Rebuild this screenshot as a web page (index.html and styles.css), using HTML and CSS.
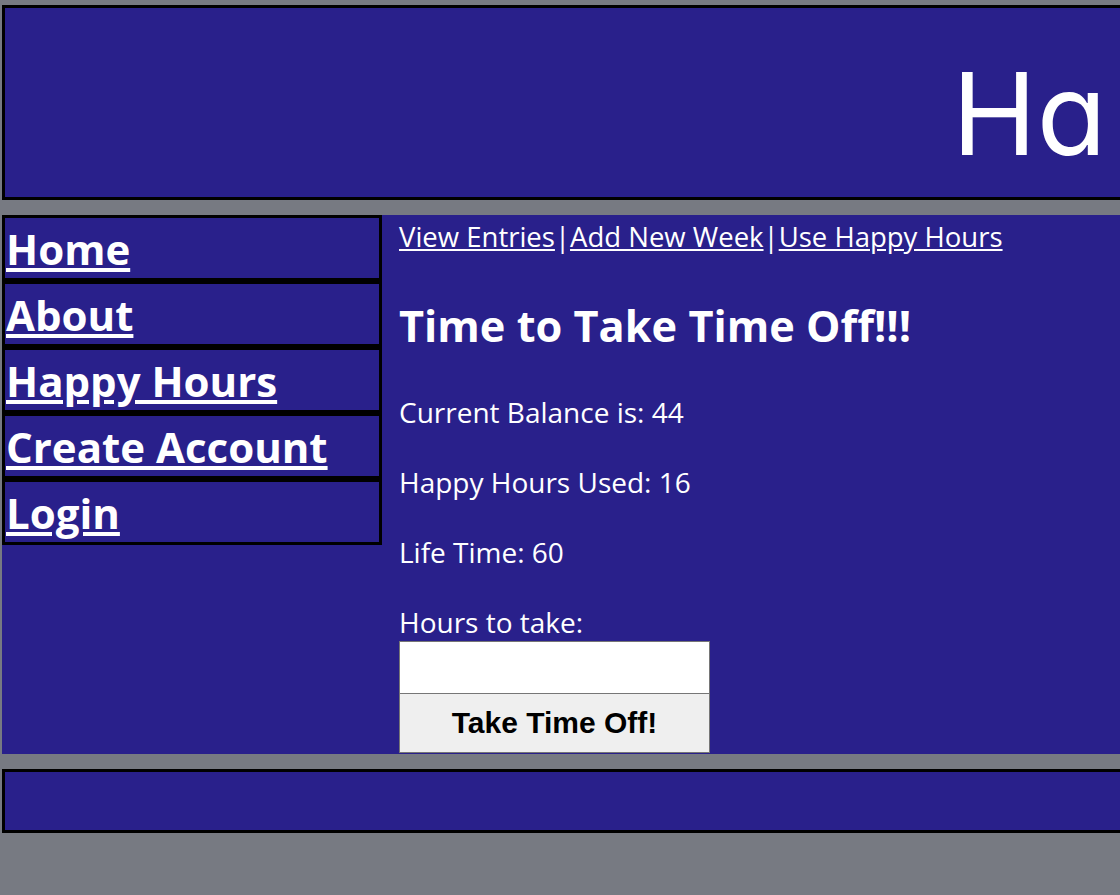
FILE: index.html
```html
<html>

<head>
  <title>Happy Hours</title>
  <meta charset="utf-8">
  <link rel="stylesheet" href="styles.css">
</head>

<body>
  <div id="header">
    <h1>Ha</h1>
  </div>
  <div id="main">
    <ul id="sidebar">
      <li><a href="#">Home</a></li>
      <li><a href="#">About</a></li>
      <li><a href="#">Happy Hours</a></li>
      <li><a href="#">Create Account</a></li>
      <li><a href="#">Login</a></li>
    </ul>
    <div id="content">
      <p class="subnav"><a href="#">View Entries</a>|<a href="#">Add New Week</a>|<a href="#">Use Happy Hours</a></p>
      <h2>Time to Take Time Off!!!</h2>
      <p class="stat">Current Balance is: 44</p>
      <p class="stat">Happy Hours Used: 16</p>
      <p class="stat">Life Time: 60</p>
      <form>
        <label class="stat" for="hours">Hours to take:</label>
        <input type="text" id="hours" name="hours">
        <button type="button">Take Time Off!</button>
      </form>
    </div>
  </div>
  <div id="footer"></div>
</body>

</html>
```

FILE: styles.css
```css
* {
  margin: 0;
  padding: 0;
  box-sizing: border-box;
}

li {
  list-style: none;
}

html {
  overflow: hidden;
}

body {
  background: #777a82;
  padding: 5px 0 0 2px;
  font-family: "Open Sans", "Noto Sans", sans-serif;
  color: #fff;
  width: 1400px;
}

a {
  color: #fff;
}

#header {
  height: 195px;
  background: #29208b;
  border: 3px solid #000;
}

#header h1 {
  font-family: Inter, sans-serif;
  font-feature-settings: "cv11";
  font-weight: 400;
  font-size: 114px;
  line-height: 140px;
  padding: 36px 0 0 947px;
  white-space: nowrap;
}

#main {
  display: flex;
  margin-top: 15px;
  background: #29208b;
  padding-bottom: 1px;
}

#sidebar {
  width: 380px;
  flex-shrink: 0;
}

#sidebar li {
  height: 66px;
  border: 3px solid #000;
}

#sidebar a {
  display: block;
  font-weight: 700;
  font-size: 42px;
  line-height: 58px;
  padding: 2px 0 0 1px;
}

#content {
  padding: 5px 0 0 17px;
}

.subnav {
  font-size: 27.5px;
  line-height: 34px;
}

h2 {
  margin-top: 42px;
  font-size: 43.3px;
  line-height: 60px;
}

.stat {
  display: block;
  font-size: 28px;
  line-height: 36px;
  margin-top: 34px;
}

h2 + .stat {
  margin-top: 38px;
}

form {
  width: 311px;
}

form label {
  margin-bottom: 1px;
}

form input {
  display: block;
  width: 311px;
  height: 53px;
  border: 1px solid #767676;
  background: #fff;
}

form button {
  display: block;
  width: 311px;
  height: 59px;
  border: 1px solid #767676;
  border-top: none;
  background: #efefef;
  font-family: "Liberation Sans", Arial, sans-serif;
  font-weight: 700;
  font-size: 30px;
  color: #000;
}

#footer {
  height: 64px;
  margin-top: 15px;
  background: #29208b;
  border: 3px solid #000;
}
```
